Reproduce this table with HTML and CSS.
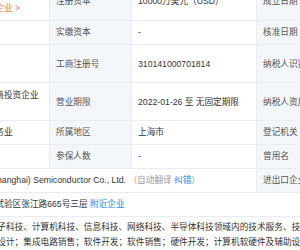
FILE: index.html
```html
<!DOCTYPE html>
<html lang="zh-CN">
<head>
<meta charset="utf-8">
<title>工商信息</title>
<link rel="stylesheet" href="styles.css">
</head>
<body>
<div class="viewport">
<table class="info">
  <colgroup>
    <col class="w-val0">
    <col class="w-label">
    <col class="w-val">
    <col class="w-label">
    <col class="w-val4">
  </colgroup>
  <tbody>
    <tr class="first">
      <td class="val">王建国<br>查看他的全部关联<a class="more">企业 &gt;</a></td>
      <td class="label">注册资本</td>
      <td class="val">10000万美元（USD）</td>
      <td class="label">成立日期</td>
      <td class="val">2022-01-26</td>
    </tr>
    <tr class="single">
      <td class="val"></td>
      <td class="label">实缴资本</td>
      <td class="val">-</td>
      <td class="label">核准日期</td>
      <td class="val">2022-01-26</td>
    </tr>
    <tr class="double">
      <td class="val">91310000MA7F<br>XXXXXX</td>
      <td class="label">工商注册号</td>
      <td class="val">310141000701814</td>
      <td class="label">纳税人识别号</td>
      <td class="val">91310000MA7F</td>
    </tr>
    <tr class="double">
      <td class="val">有限责任公司（外商投资企业<br>法人独资）</td>
      <td class="label">营业期限</td>
      <td class="val">2022-01-26 至 无固定期限</td>
      <td class="label">纳税人资质</td>
      <td class="val">-</td>
    </tr>
    <tr class="single">
      <td class="val">科技推广和应用服务业</td>
      <td class="label">所属地区</td>
      <td class="val">上海市</td>
      <td class="label">登记机关</td>
      <td class="val">自由贸易试验区</td>
    </tr>
    <tr class="single">
      <td class="val"></td>
      <td class="label">参保人数</td>
      <td class="val">-</td>
      <td class="label">曾用名</td>
      <td class="val">-</td>
    </tr>
    <tr class="single">
      <td class="val" colspan="3">Lux Technology (Shanghai) Semiconductor Co., Ltd. <span class="muted">（自动翻译 <a class="link">纠错</a>）</span></td>
      <td class="label">进出口企业代码</td>
      <td class="val">-</td>
    </tr>
    <tr class="single">
      <td class="val" colspan="5">（上海）自由贸易试验区张江路665号三层 <a class="link">附近企业</a></td>
    </tr>
    <tr class="scope-row">
      <td class="val scope" colspan="5">一般项目：从事电子科技、计算机科技、信息科技、网络科技、半导体科技领域内的技术服务、技术开发、技术咨询、技<br>术推广；集成电路设计；集成电路销售；软件开发；软件销售；硬件开发；计算机软硬件及辅助设备零售</td>
    </tr>
  </tbody>
</table>
</div>
</body>
</html>
```

FILE: styles.css
```css
html, body {
  margin: 0;
  padding: 0;
  background: #ffffff;
}
.viewport {
  width: 300px;
  height: 250px;
  overflow: hidden;
}
.info {
  border-collapse: collapse;
  table-layout: fixed;
  width: 519px;
  margin-left: -81px;
  margin-top: -20px;
  font-family: "Liberation Sans", "Noto Sans CJK SC", sans-serif;
  font-size: 8.67px;
  line-height: 13px;
  color: #333333;
}
.w-val0 { width: 130px; }
.w-label { width: 82px; }
.w-val { width: 125px; }
.w-val4 { width: 100px; }
.info td {
  border: 1px solid #e9edf2;
  padding: 0 6px;
  vertical-align: middle;
  overflow: hidden;
  white-space: nowrap;
}
.info tr.first { height: 40px; }
.info tr.first td { line-height: 14px; }
.info tr.single { height: 24px; }
.info tr.double { height: 38px; }
.info tr.double td { line-height: 14px; }
.info td.label {
  background: #f3f7fc;
  color: #555555;
}
.more { color: #f5704f; text-decoration: none; }
.link { color: #128bed; text-decoration: none; }
.muted { color: #999999; }
.info td.scope {
  line-height: 15px;
  padding-top: 3px;
  padding-bottom: 6px;
  padding-left: 8px;
  vertical-align: top;
}
```
